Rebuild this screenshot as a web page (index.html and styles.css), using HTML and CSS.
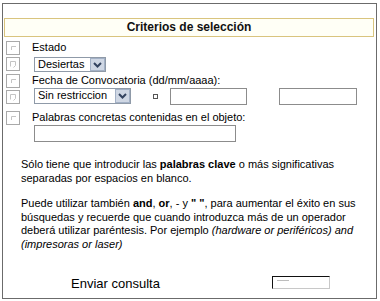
FILE: index.html
```html
<!DOCTYPE html>
<html lang="es">
<head>
<meta charset="utf-8">
<title>Criterios de selección</title>
<link rel="stylesheet" href="styles.css">
</head>
<body>
<div class="panel">
  <div class="header">Criterios de selección</div>

  <div class="rows">
    <div class="row r1">
      <span class="ico"><svg width="14" height="14" viewBox="0 0 14 14"><rect x="0.5" y="0.5" width="13" height="13" fill="#fff" stroke="#a9a9a9"/><path d="M5.5 9V5.5H10" fill="none" stroke="#c4c4c4"/></svg></span>
      <span class="label">Estado</span>
    </div>
    <div class="row r2">
      <span class="ico"><svg width="14" height="14" viewBox="0 0 14 14"><rect x="0.5" y="0.5" width="13" height="13" fill="#fff" stroke="#a9a9a9"/><path d="M4.5 9.5V4.5H9.5V8.5L7.5 10.5" fill="none" stroke="#c4c4c4"/></svg></span>
      <span class="select sel-estado"><span class="sel-text">Desiertas</span><span class="arrow"><svg width="9" height="6" viewBox="0 0 9 6"><path d="M1 1L4.5 4.5L8 1" fill="none" stroke="#33435f" stroke-width="2"/></svg></span></span>
    </div>
    <div class="row r3">
      <span class="ico"><svg width="14" height="14" viewBox="0 0 14 14"><rect x="0.5" y="0.5" width="13" height="13" fill="#fff" stroke="#a9a9a9"/><path d="M5.5 9V5.5H10" fill="none" stroke="#c4c4c4"/></svg></span>
      <span class="label">Fecha de Convocatoria (dd/mm/aaaa):</span>
    </div>
    <div class="row r4">
      <span class="ico"><svg width="14" height="14" viewBox="0 0 14 14"><rect x="0.5" y="0.5" width="13" height="13" fill="#fff" stroke="#a9a9a9"/><path d="M4.5 9.5V4.5H9.5V8.5L7.5 10.5" fill="none" stroke="#c4c4c4"/></svg></span>
      <span class="select sel-fecha"><span class="sel-text">Sin restriccion</span><span class="arrow"><svg width="9" height="6" viewBox="0 0 9 6"><path d="M1 1L4.5 4.5L8 1" fill="none" stroke="#33435f" stroke-width="2"/></svg></span></span>
      <span class="dot"></span>
      <span class="input date1"></span>
      <span class="input date2"></span>
    </div>
    <div class="row r5">
      <span class="ico"><svg width="14" height="14" viewBox="0 0 14 14"><rect x="0.5" y="0.5" width="13" height="13" fill="#fff" stroke="#a9a9a9"/><path d="M5.5 9V5.5H10" fill="none" stroke="#c4c4c4"/></svg></span>
      <span class="label">Palabras concretas contenidas en el objeto:</span>
    </div>
    <div class="row r6">
      <span class="ico-space"></span>
      <span class="input words"></span>
    </div>
  </div>

  <p class="info p1">Sólo tiene que introducir las <b>palabras clave</b> o más significativas<br>separadas por espacios en blanco.</p>
  <p class="info p2">Puede utilizar también <b>and</b>, <b>or</b>, - y <b>" "</b>, para aumentar el éxito en sus<br>búsquedas y recuerde que cuando introduzca más de un operador<br>deberá utilizar paréntesis. Por ejemplo <i>(hardware or periféricos) and</i><br><i>(impresoras or laser)</i></p>

  <div class="submit-row">
    <span class="submit-text">Enviar consulta</span>
    <span class="submit-btn"><span class="btn-mark"></span></span>
  </div>
</div>
</body>
</html>
```

FILE: styles.css
```css
html, body {
  margin: 0;
  padding: 0;
  background: #fff;
}

body {
  font-family: "Liberation Sans", Arial, sans-serif;
  font-size: 11px;
  color: #000;
}

.panel {
  box-sizing: border-box;
  width: 375px;
  height: 296px;
  margin: 3px 0 0 2px;
  border: 1px solid #6b6b6b;
}

.header {
  box-sizing: border-box;
  height: 19px;
  margin: 14px 2px 0 1px;
  border: 1px solid #d9c47e;
  background: #fffff6;
  font-weight: bold;
  font-size: 12px;
  line-height: 17px;
  text-align: center;
  color: #111;
}

.rows {
  margin-top: 3px;
  padding-left: 3px;
}

.row {
  display: flex;
  align-items: flex-start;
}

.ico, .ico-space {
  flex: none;
  width: 14px;
  height: 14px;
  margin-right: 12px;
}

.ico svg {
  display: block;
}

.label {
  line-height: 14px;
  white-space: nowrap;
}

.r1 { height: 16px; }
.r1 .ico { margin-top: 1px; }

.r2 { height: 17px; }
.r2 .ico { margin-top: 1px; }
.r2 .select { margin-top: 1px; }

.r3 { height: 15px; }
.r3 .ico { margin-top: 1px; }

.r4 { height: 20px; }
.r4 .ico { margin-top: 2px; }

.r5 { height: 17px; }
.r5 .ico { margin-top: 3px; }
.r5 .label { margin-top: 2px; }

.r6 { height: 17px; }

.select {
  box-sizing: border-box;
  display: flex;
  align-items: stretch;
  margin-left: 2px;
  border: 1px solid #8f9aa8;
  background: #fff;
  line-height: 13px;
}

.sel-text {
  flex: 1;
  padding-left: 3px;
  white-space: nowrap;
}

.sel-estado {
  width: 72px;
  height: 15px;
}

.sel-fecha {
  width: 97px;
  height: 16px;
}

.arrow {
  box-sizing: border-box;
  flex: none;
  width: 15px;
  display: flex;
  align-items: center;
  justify-content: center;
  background: #cfd7e4;
  border: 1px solid #a3b1c6;
}

.arrow svg {
  display: block;
}

.dot {
  box-sizing: border-box;
  flex: none;
  width: 5px;
  height: 5px;
  margin: 6px 0 0 22px;
  border: 1px solid #555;
}

.input {
  box-sizing: border-box;
  flex: none;
  height: 17px;
  border: 1px solid #8c8c8c;
  background: #fff;
}

.date1 {
  width: 77px;
  margin-left: 12px;
}

.date2 {
  width: 78px;
  margin-left: 32px;
}

.words {
  width: 202px;
  margin-left: 2px;
}

.info {
  margin: 0;
  padding: 0 6px 0 18px;
  line-height: 13.6px;
  white-space: nowrap;
}

.p1 {
  margin-top: 16px;
}

.p2 {
  margin-top: 12px;
}

.submit-row {
  display: flex;
  align-items: flex-start;
  margin-top: 24px;
  padding-left: 68px;
}

.submit-text {
  font-size: 13px;
  line-height: 16px;
  width: 201px;
}

.submit-btn {
  box-sizing: border-box;
  display: block;
  width: 58px;
  height: 13px;
  border-top: 1px solid #111;
  border-left: 1px solid #111;
  border-right: 1px solid #c8c8c8;
  border-bottom: 1px solid #c8c8c8;
  padding: 3px 0 0 4px;
}

.btn-mark {
  display: block;
  width: 12px;
  height: 2px;
  border-top: 1px solid #bdbdbd;
}
```
